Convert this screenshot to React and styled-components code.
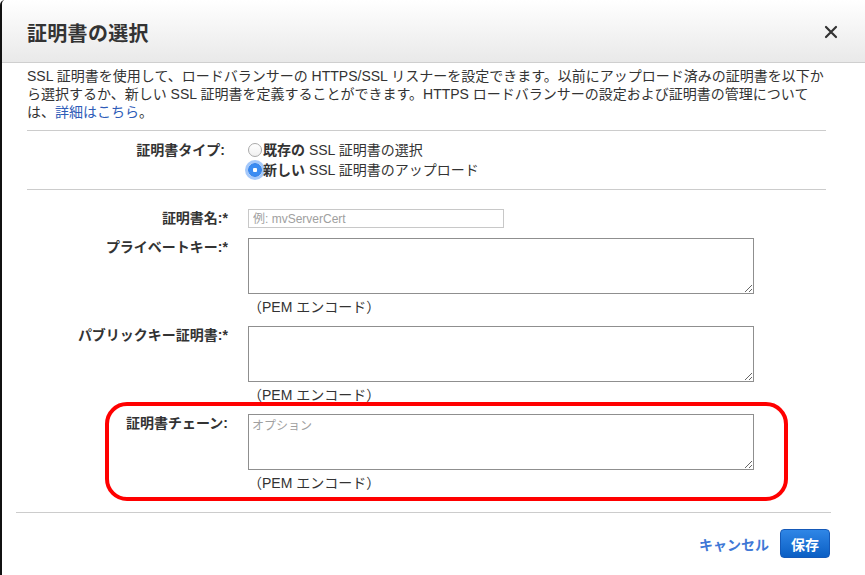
import React from "react";
import styled, { createGlobalStyle } from "styled-components";

const Global = createGlobalStyle`
  html, body { margin: 0; padding: 0; background: #fff; }
  body {
    font-family: "Liberation Sans", "Noto Sans CJK JP", sans-serif;
    color: #333;
    -webkit-font-smoothing: antialiased;
  }
  * { box-sizing: border-box; }
`;

const Dialog = styled.div`
  width: 865px;
  height: 575px;
  border-left: 2px solid #111;
  border-top-left-radius: 5px;
  overflow: hidden;
  display: flex;
  flex-direction: column;
  background: #fff;
`;

const Header = styled.div`
  height: 63px;
  flex: none;
  display: flex;
  align-items: center;
  justify-content: space-between;
  padding: 2px 27px 0 25px;
  background: linear-gradient(#ffffff, #e9e9e9);
  border-bottom: 1px solid #cfcfcf;
`;

const Title = styled.h2`
  margin: 0;
  font-size: 20px;
  font-weight: bold;
  color: #333;
  letter-spacing: 0.3px;
`;

const CloseButton = styled.button`
  border: none;
  background: none;
  padding: 0;
  width: 14px;
  height: 14px;
  display: flex;
  cursor: pointer;
`;

const Body = styled.div`
  padding: 4px 39px 0 25px;
`;

const Description = styled.p`
  margin: 0;
  font-size: 14px;
  line-height: 18px;
  color: #333;
`;

const Link = styled.a`
  color: #2e5cb8;
  text-decoration: none;
`;

const Divider = styled.div`
  border-top: 1px solid #cccccc;
  margin: ${(p) => p.$margin || "10px 0"};
`;

const Row = styled.div`
  display: grid;
  grid-template-columns: 201px 506px;
  column-gap: 20px;
  position: relative;
`;

const Label = styled.div`
  text-align: right;
  font-size: 14px;
  line-height: ${(p) => (p.$lh ? p.$lh : "18px")};
  font-weight: bold;
  color: #333;
  padding-right: ${(p) => p.$pr || "0"};
`;

const RadioGroup = styled.div`
  display: flex;
  flex-direction: column;
`;

const RadioLabel = styled.label`
  display: flex;
  align-items: center;
  font-size: 14px;
  line-height: 20px;
  color: #333;
  gap: 1px;
  b { font-weight: bold; }
`;

const Radio = styled.input.attrs({ type: "radio" })`
  appearance: none;
  margin: 0;
  width: 14px;
  height: 14px;
  border-radius: 50%;
  border: 1px solid #a9a9a9;
  background: linear-gradient(#fff, #f0f0f0);
  flex: none;
  &:checked {
    border-color: #2f7ee8;
    background: radial-gradient(circle, #fff 0 2px, #3b8cf2 2.5px);
    box-shadow: 0 0 0 3px rgba(90, 155, 245, 0.55);
  }
`;

const Form = styled.div`
  display: flex;
  flex-direction: column;
  gap: 10px;
`;

const Field = styled.div`
  display: flex;
  flex-direction: column;
`;

const TextInput = styled.input`
  width: 256px;
  height: 19px;
  margin: 0;
  border: 1px solid #c8c8c8;
  padding: 0 4px;
  font-family: inherit;
  font-size: 12px;
  color: #333;
  &::placeholder { color: #a0a0a0; }
`;

const TextArea = styled.textarea`
  width: 506px;
  height: 56px;
  margin: 0;
  border: 1px solid #8f8f8f;
  padding: 3px 3px;
  font-family: inherit;
  font-size: 12px;
  line-height: 16px;
  resize: both;
  &::placeholder { color: #a0a0a0; }
`;

const Note = styled.div`
  margin-top: 4px;
  font-size: 14px;
  line-height: 18px;
  color: #333;
`;

const Highlight = styled.div`
  position: absolute;
  top: -12px;
  left: 78px;
  width: 683px;
  height: 99px;
  border: 4px solid #ff0000;
  border-radius: 22px;
  pointer-events: none;
`;

const FooterDivider = styled.div`
  border-top: 1px solid #cccccc;
  margin: 20px 34px 0 14px;
`;

const Footer = styled.div`
  display: flex;
  justify-content: flex-end;
  align-items: center;
  gap: 11px;
  padding: 16px 35px 0 0;
`;

const CancelLink = styled.a`
  font-size: 14px;
  font-weight: bold;
  color: #3f78d6;
  text-decoration: none;
  cursor: pointer;
`;

const SaveButton = styled.button`
  height: 29px;
  padding: 0 10px;
  border: 1px solid #1559b8;
  border-radius: 4px;
  background: linear-gradient(#2f86e6, #0b5fc4);
  color: #fff;
  font-family: inherit;
  font-size: 14px;
  font-weight: bold;
  cursor: pointer;
`;

function CloseIcon() {
  return (
    <svg width="14" height="14" viewBox="0 0 14 14">
      <path d="M2 2 L12 12 M12 2 L2 12" stroke="#333" strokeWidth="2.2" strokeLinecap="round" />
    </svg>
  );
}

export default function App() {
  return (
    <>
      <Global />
      <Dialog>
        <Header>
          <Title>証明書の選択</Title>
          <CloseButton aria-label="閉じる">
            <CloseIcon />
          </CloseButton>
        </Header>
        <Body>
          <Description>
            SSL 証明書を使用して、ロードバランサーの HTTPS/SSL リスナーを設定できます。以前にアップロード済みの証明書を以下か
            <br />
            ら選択するか、新しい SSL 証明書を定義することができます。HTTPS ロードバランサーの設定および証明書の管理について
            <br />
            は、<Link href="#">詳細はこちら</Link>。
          </Description>
          <Divider $margin="9px 0 9px" />
          <Row>
            <Label $pr="3px" $lh="20px">証明書タイプ:</Label>
            <RadioGroup>
              <RadioLabel>
                <Radio name="certType" />
                <span><b>既存の</b> SSL 証明書の選択</span>
              </RadioLabel>
              <RadioLabel>
                <Radio name="certType" defaultChecked />
                <span><b>新しい</b> SSL 証明書のアップロード</span>
              </RadioLabel>
            </RadioGroup>
          </Row>
          <Divider $margin="9px 0 19px" />
          <Form>
            <Row>
              <Label $lh="19px">証明書名:*</Label>
              <Field>
                <TextInput placeholder="例: mvServerCert" />
              </Field>
            </Row>
            <Row>
              <Label>プライベートキー:*</Label>
              <Field>
                <TextArea />
                <Note>（PEM エンコード）</Note>
              </Field>
            </Row>
            <Row>
              <Label>パブリックキー証明書:*</Label>
              <Field>
                <TextArea />
                <Note>（PEM エンコード）</Note>
              </Field>
            </Row>
            <Row>
              <Label>証明書チェーン:</Label>
              <Field>
                <TextArea placeholder="オプション" />
                <Note>（PEM エンコード）</Note>
              </Field>
              <Highlight />
            </Row>
          </Form>
        </Body>
        <FooterDivider />
        <Footer>
          <CancelLink>キャンセル</CancelLink>
          <SaveButton>保存</SaveButton>
        </Footer>
      </Dialog>
    </>
  );
}
